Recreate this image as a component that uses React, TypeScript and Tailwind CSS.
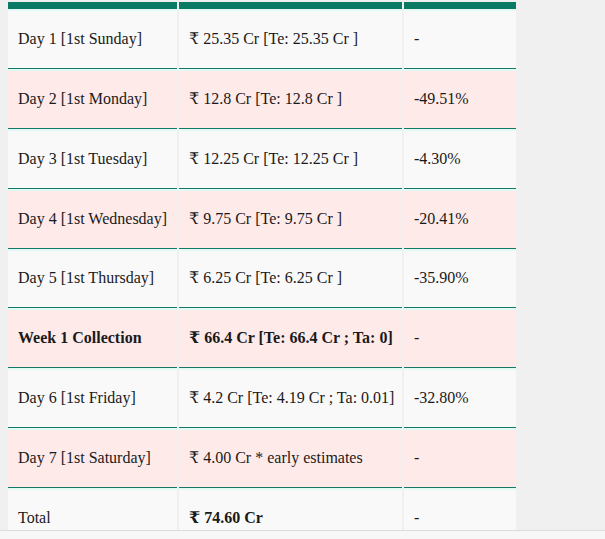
const rows: { day: string; amount: string; change: string; bold?: boolean; boldAmount?: boolean }[] = [
  { day: "Day 1 [1st Sunday]", amount: "₹ 25.35 Cr [Te: 25.35 Cr ]", change: "-" },
  { day: "Day 2 [1st Monday]", amount: "₹ 12.8 Cr [Te: 12.8 Cr ]", change: "-49.51%" },
  { day: "Day 3 [1st Tuesday]", amount: "₹ 12.25 Cr [Te: 12.25 Cr ]", change: "-4.30%" },
  { day: "Day 4 [1st Wednesday]", amount: "₹ 9.75 Cr [Te: 9.75 Cr ]", change: "-20.41%" },
  { day: "Day 5 [1st Thursday]", amount: "₹ 6.25 Cr [Te: 6.25 Cr ]", change: "-35.90%" },
  { day: "Week 1 Collection", amount: "₹ 66.4 Cr [Te: 66.4 Cr ; Ta: 0]", change: "-", bold: true, boldAmount: true },
  { day: "Day 6 [1st Friday]", amount: "₹ 4.2 Cr [Te: 4.19 Cr ; Ta: 0.01]", change: "-32.80%" },
  { day: "Day 7 [1st Saturday]", amount: "₹ 4.00 Cr * early estimates", change: "-" },
  { day: "Total", amount: "₹ 74.60 Cr", change: "-", boldAmount: true },
]

export default function App() {
  return (
    <div className="h-[539px] overflow-hidden bg-[#f0f0f0] pt-[2px] pl-[8px] font-['Liberation_Serif','DejaVu_Serif',serif] text-[16px] text-[#1a1a1a]">
      <div className="grid w-[508px] grid-cols-[169px_223px_112px] gap-x-[2px]">
        {/* header bar */}
        <div className="h-[7px] bg-[#0b7a64]" />
        <div className="h-[7px] bg-[#0b7a64]" />
        <div className="h-[7px] bg-[#0b7a64]" />

        {rows.map((r, i) => {
          const bg = i % 2 === 0 ? "bg-[#f9f9f9]" : "bg-[#ffeaea]"
          return <Row key={i} bg={bg} r={r} short={i === 4} />
        })}
      </div>

      {/* scrollbar strip at the bottom */}
      <div className="fixed bottom-0 left-0 right-0 h-[9px] border-t border-[#dcdcdc] bg-[#f7f7f7]" />
    </div>
  )
}

function Row({ bg, r, short }: { bg: string; r: (typeof rows)[number]; short?: boolean }) {
  const h = short ? "h-[59px]" : "h-[60px]"
  const cell = `${h} flex items-center px-[10px] pb-[2px] border-t-2 border-t-[#e2faf3] border-b border-b-[#137a68] whitespace-nowrap ${bg}`
  return (
    <>
      <div className={`${cell} ${r.bold ? "font-bold" : ""}`}>{r.day}</div>
      <div className={`${cell} ${r.boldAmount ? "font-bold" : ""}`}>{r.amount}</div>
      <div className={cell}>{r.change}</div>
    </>
  )
}
